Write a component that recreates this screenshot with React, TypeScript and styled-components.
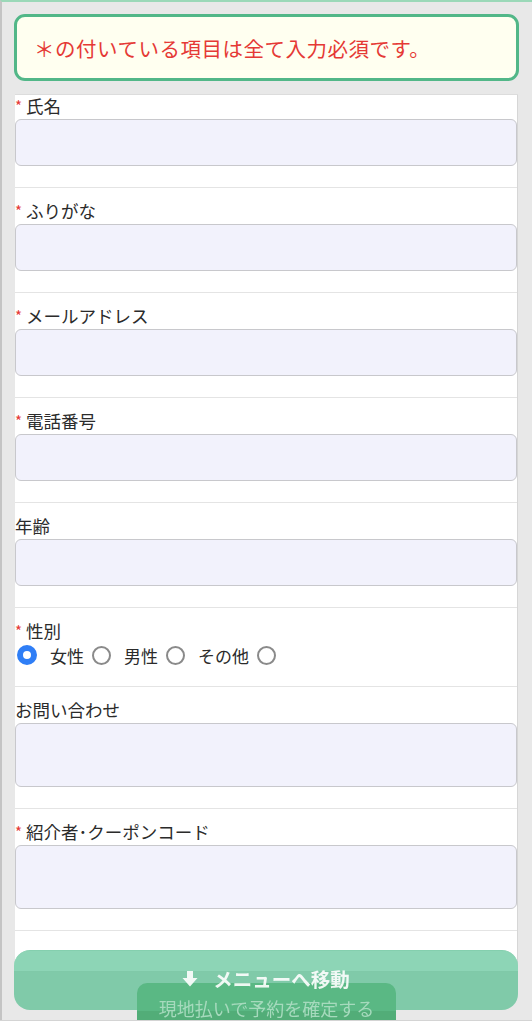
import React, { FC, useState } from 'react';
import styled, { createGlobalStyle } from 'styled-components';

const GlobalStyle = createGlobalStyle`
  html, body {
    margin: 0;
    padding: 0;
    background: #e8e8e8;
  }
  body {
    font-family: 'Noto Sans CJK JP', 'Noto Sans', sans-serif;
    color: #333;
  }
  * {
    box-sizing: border-box;
  }
`;

const Page = styled.div`
  min-height: 100vh;
  border-top: 2px solid #9bd8b8;
  border-left: 2px solid #c4c4c4;
  padding: 12px 13px 0 12px;
`;

const Notice = styled.div`
  height: 67px;
  border: 3px solid #52b788;
  border-radius: 11px;
  background: #fffff0;
  display: flex;
  align-items: center;
  padding: 0 0 0 17px;
  color: #e53935;
  font-size: 20.5px;
  letter-spacing: 0.5px;
`;

const Card = styled.div`
  margin: 14px 0 0 1px;
  width: 503px;
  padding-bottom: 40px;
  background: #fff;
  border-right: 1px solid #d6d6d6;
  box-shadow: 0 -1px 0 #dcdcdc;
`;

const Row = styled.div<{ $first?: boolean; $tight?: boolean }>`
  padding: ${(p) => (p.$first ? '0' : '12px')} 0 ${(p) => (p.$tight ? '20px' : '21px')};
  border-bottom: 1px solid #e4e4e4;
`;

const Label = styled.label`
  display: flex;
  align-items: center;
  height: 24px;
  padding-bottom: 4px;
  font-size: 17.5px;
  color: #2b2b2b;
`;

const Req = styled.span`
  color: #e53935;
  margin-right: 4px;
  font-size: 15px;
`;

const TextInput = styled.input`
  display: block;
  width: 100%;
  height: 47px;
  margin: 0;
  border: 1px solid #c8c8cc;
  border-radius: 6px;
  background: #f2f2fc;
  outline: none;
`;

const TextArea = styled.textarea`
  display: block;
  width: 100%;
  height: 64px;
  margin: 0;
  border: 1px solid #c8c8cc;
  border-radius: 6px;
  background: #f2f2fc;
  resize: none;
  outline: none;
`;

const RadioRow = styled.div`
  display: flex;
  align-items: center;
  height: 22px;
  font-size: 17px;
  color: #2b2b2b;
`;

const Radio = styled.input.attrs({ type: 'radio' })`
  appearance: none;
  margin: 0 0 0 2px;
  width: 19px;
  height: 19px;
  border-radius: 50%;
  border: 2px solid #8a8a8a;
  background: #fff;

  &:checked {
    width: 20px;
    height: 20px;
    border: 6px solid #2f7ef6;
  }
`;

const RadioText = styled.span`
  margin: 0 6px 0 13px;
`;

const Footer = styled.div`
  position: fixed;
  left: 14px;
  right: 14px;
  bottom: 0;
  height: 74px;
`;

const BottomLine = styled.div`
  position: fixed;
  left: 0;
  right: 0;
  bottom: 0;
  height: 4px;
  background: #fff;
  border-top: 1px solid #d4d4d4;
`;

const MenuButton = styled.div`
  position: absolute;
  top: 0;
  left: 0;
  right: 0;
  height: 60px;
  border-radius: 16px;
  background: linear-gradient(#8dd5b6 0, #8dd5b6 20px, #7fc8a7 20px, #80caa9 21px, #80caa9 100%);
  border-top: 1px solid #84cfae;
`;

const MenuLabel = styled.div`
  position: absolute;
  top: 14px;
  left: 0;
  right: 0;
  z-index: 3;
  display: flex;
  justify-content: center;
  align-items: center;
  gap: 15px;
  color: #fff;
  font-size: 19.5px;
  font-weight: 700;
  opacity: 0.9;
`;

const ConfirmButton = styled.div`
  position: absolute;
  top: 33px;
  left: 123px;
  width: 259px;
  height: 37px;
  z-index: 2;
  border-radius: 10px 10px 0 0;
  background: linear-gradient(#5ab884 0, #5ab884 28px, #52ad78 28px);
  color: #a6dabd;
  font-size: 18px;
  text-align: center;
  padding-top: 12px;
  line-height: 26px;
`;

const ArrowDown: FC = () => (
  <svg width="16" height="18" viewBox="0 0 16 18">
    <path d="M5 1h6v7h4.5L8 16.5 0.5 8H5z" fill="#fff" />
  </svg>
);

const fields = [
  { label: '氏名', req: true },
  { label: 'ふりがな', req: true },
  { label: 'メールアドレス', req: true },
  { label: '電話番号', req: true },
  { label: '年齢', req: false }
];

const genders = ['女性', '男性', 'その他'];

const App: FC = () => {
  const [gender, setGender] = useState(0);

  return (
    <>
      <GlobalStyle />
      <Page>
        <Notice>＊の付いている項目は全て入力必須です。</Notice>
        <Card>
          {fields.map((f, i) => (
            <Row key={f.label} $first={i === 0}>
              <Label>
                {f.req && <Req>*</Req>}
                {f.label}
              </Label>
              <TextInput type="text" />
            </Row>
          ))}
          <Row $tight>
            <Label>
              <Req>*</Req>性別
            </Label>
            <RadioRow>
              {genders.map((g, i) => (
                <React.Fragment key={g}>
                  <Radio name="g" checked={gender === i} onChange={() => setGender(i)} />
                  <RadioText>{g}</RadioText>
                </React.Fragment>
              ))}
              <Radio name="g" checked={gender === 3} onChange={() => setGender(3)} />
            </RadioRow>
          </Row>
          <Row>
            <Label>お問い合わせ</Label>
            <TextArea />
          </Row>
          <Row>
            <Label>
              <Req>*</Req>紹介者･クーポンコード
            </Label>
            <TextArea />
          </Row>
        </Card>
      </Page>
      <BottomLine />
      <Footer>
        <MenuButton />
        <ConfirmButton>現地払いで予約を確定する</ConfirmButton>
        <MenuLabel>
          <ArrowDown />
          メニューへ移動
        </MenuLabel>
      </Footer>
    </>
  );
};

export default App;
